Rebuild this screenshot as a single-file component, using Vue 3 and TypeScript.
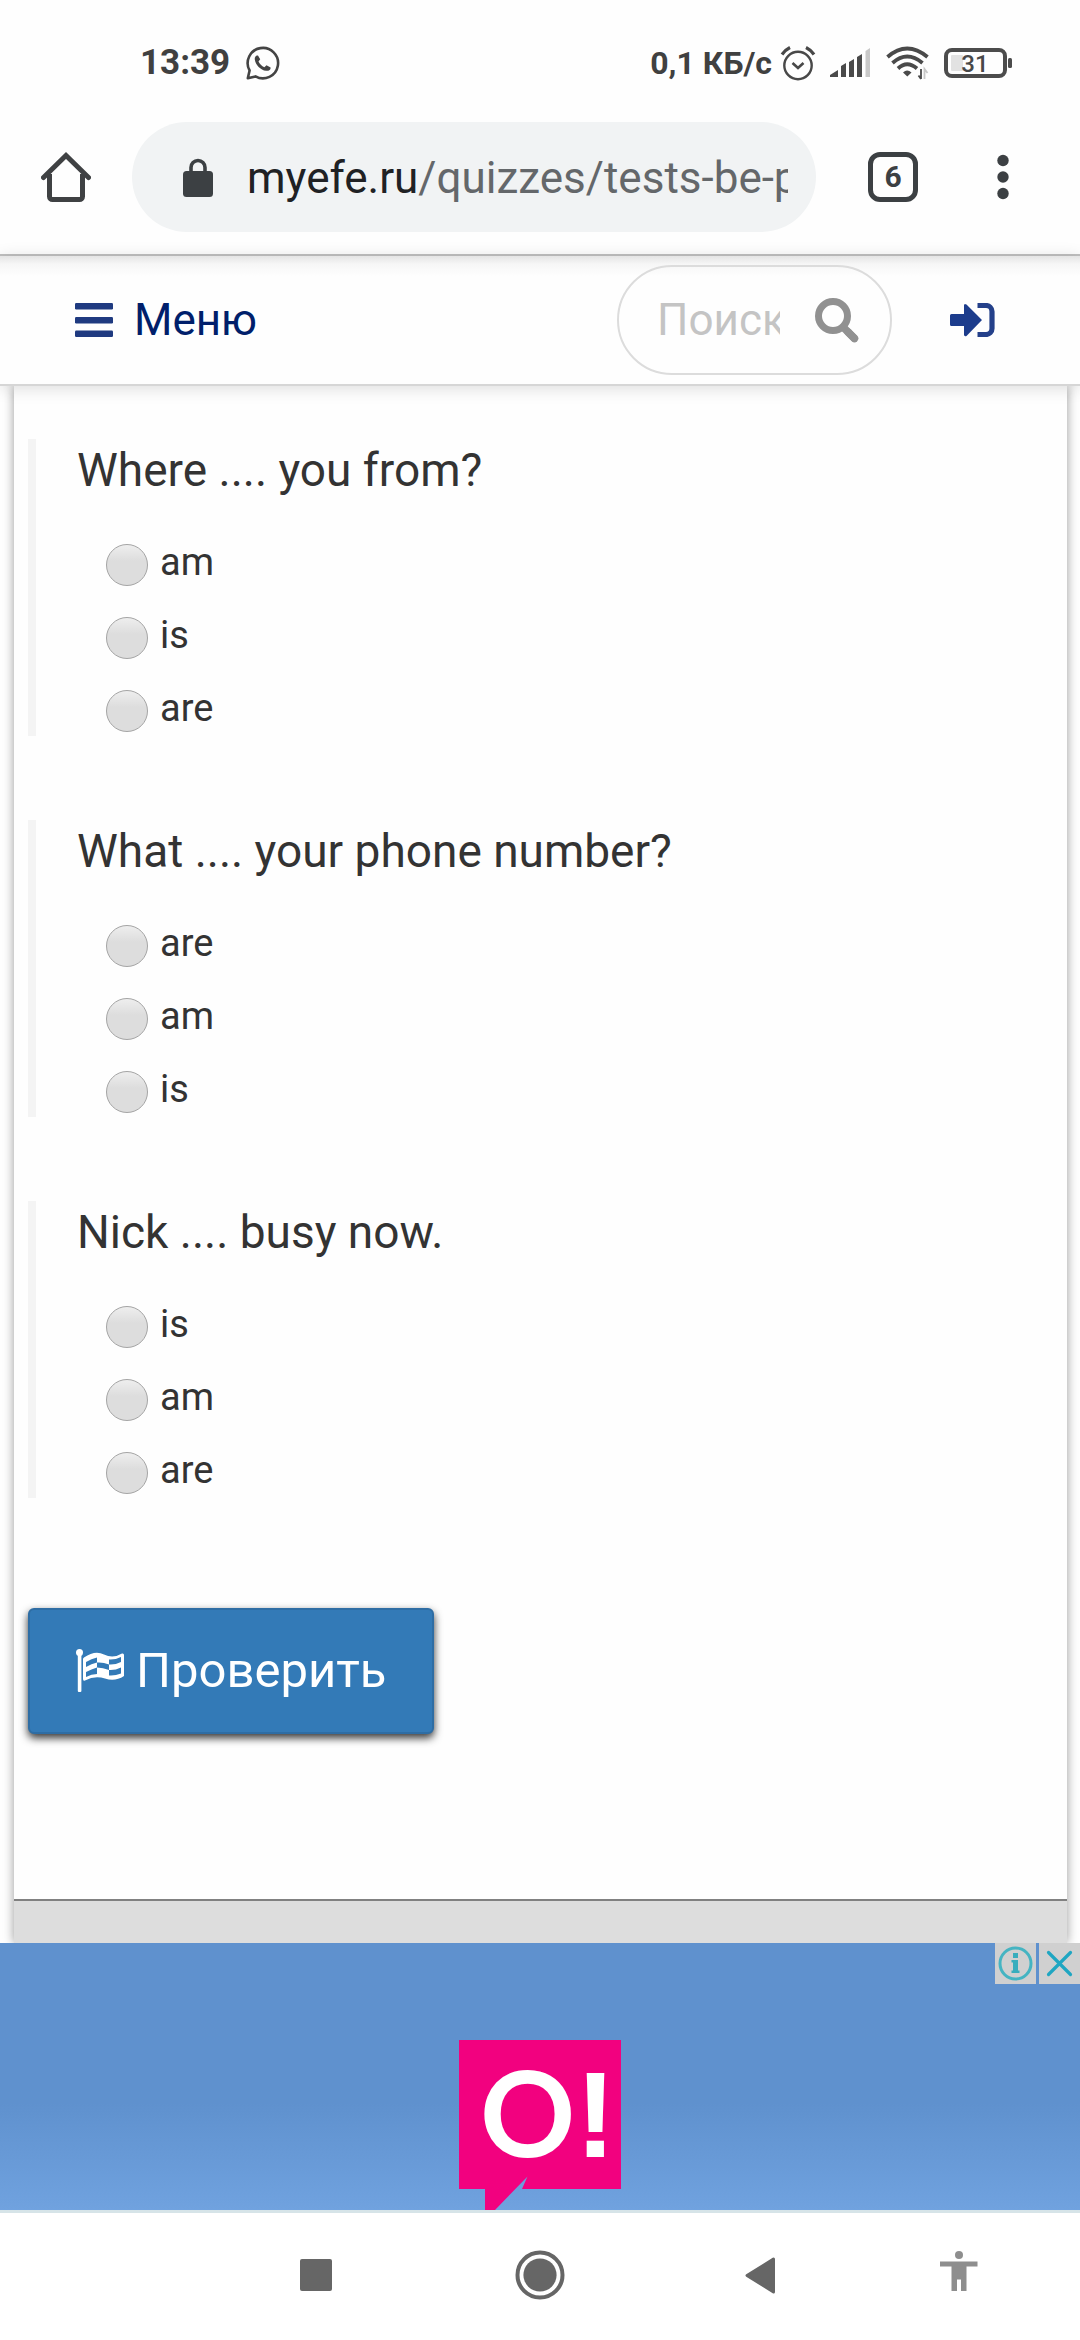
<script setup lang="ts">
import { ref } from 'vue'

interface Question {
  id: string
  title: string
  options: string[]
}

const questions: Question[] = [
  { id: 'q1', title: 'Where .... you from?', options: ['am', 'is', 'are'] },
  { id: 'q2', title: 'What .... your phone number?', options: ['are', 'am', 'is'] },
  { id: 'q3', title: 'Nick .... busy now.', options: ['is', 'am', 'are'] },
]

const answers = ref<Record<string, string>>({})
const query = ref('')
</script>

<template>
  <div class="screen">
    <div class="status">
      <span class="clock">13:39</span>
      <svg class="whatsapp" width="34" height="34" viewBox="0 0 34 34" fill="none">
        <path d="M3.600 24.500A15.200 15.200 0 1 1 9.500 30.400L1.800 32.200Z" stroke="#444" stroke-width="2.600" stroke-linejoin="round" />
        <path d="M12 9.500c-2-.6-3.500 1.400-3.200 3.900.7 5.300 5.700 10.600 11.300 11.400 2.500.3 4.900-1.200 4.500-3.400l-4.100-2.200-2.100 2c-2.700-1.100-4.800-3.200-5.900-5.700l1.700-2.200z" fill="#444" />
      </svg>
      <span class="speed">0,1 КБ/с</span>
      <svg class="alarm" width="36" height="36" viewBox="0 0 36 36" fill="none" stroke="#484848">
        <circle cx="18" cy="20.500" r="13.700" stroke-width="2.400" />
        <path d="M12.500 18l5.500 5 5.500-5" stroke-width="2.600" />
        <path d="M2 9.500Q5 5 10 2.500M34 9.500Q31 5 26 2.500" stroke-width="3.200" />
      </svg>
      <svg class="signal" width="40" height="30" viewBox="0 0 40 30" fill="#4a4a4a">
        <path d="M0 29v-2l8-5v7zM11 29V18l5-3v14zM19 29V14l5-3v18zM27 29V9l5-3v23z" />
        <path d="M35.500 29V3l4.500-3v29z" fill="#c8c8c8" />
      </svg>
      <svg class="wifi" width="44" height="34" viewBox="0 0 44 34" fill="none" stroke="#4a4a4a" stroke-width="3.800">
        <path d="M1.500 11Q21 -6 41.500 11M6.500 17Q21 4 36.500 17M12 22.500Q21 14 31 22.500" />
        <path d="M17 26.500q4-4 8.500 0l-4.200 4z" fill="#4a4a4a" stroke="none" />
        <path d="M35 23v10M32.500 29.500l2.500 3.500" stroke-width="1.800" />
        <path d="M38.500 33V23l3 4" stroke="#c8c8c8" stroke-width="1.800" />
      </svg>
      <svg class="battery" width="70" height="30" viewBox="0 0 70 30">
        <rect x="2" y="2" width="59" height="26" rx="6" fill="none" stroke="#4c4c4c" stroke-width="4" />
        <rect x="7" y="7" width="12" height="16" rx="1" fill="#e2e2e2" />
        <rect x="64" y="10" width="4" height="10" rx="1.500" fill="#4c4c4c" />
        <text x="31" y="24" text-anchor="middle" class="charge">31</text>
      </svg>
    </div>

    <div class="toolbar">
      <button class="plain" type="button" aria-label="Home">
        <svg width="50" height="50" viewBox="0 0 50 50" fill="none" stroke="#3f4143">
          <path d="M8.500 22v22.500a3 3 0 0 0 3 3h27a3 3 0 0 0 3-3V22" stroke-width="5" />
          <path d="M2.500 25.500L25 3.500l22.500 22" stroke-width="5" stroke-linecap="round" />
        </svg>
      </button>
      <button class="address" type="button">
        <svg class="lock" width="30" height="40" viewBox="0 0 30 40">
          <path d="M8 15V9.500a7 7 0 0 1 14 0V15" fill="none" stroke="#3c4043" stroke-width="3.600" />
          <rect x="0" y="13" width="30" height="26" rx="3.500" fill="#3c4043" />
        </svg>
        <span class="url"><span class="host">myefe.ru</span>/quizzes/tests-be-p</span>
      </button>
      <button class="plain tabs" type="button" aria-label="Tabs">6</button>
      <button class="plain more" type="button" aria-label="More">
        <svg width="12" height="46" viewBox="0 0 12 46" fill="#3c4043">
          <circle cx="6" cy="6.500" r="5.700" />
          <circle cx="6" cy="23" r="5.700" />
          <circle cx="6" cy="39.500" r="5.700" />
        </svg>
      </button>
    </div>

    <header class="site-header">
      <a class="menu" href="#menu">
        <svg width="38" height="34" viewBox="0 0 38 34" fill="#1f3a80">
          <rect y="0" width="38" height="6.500" rx="1.200" />
          <rect y="14" width="38" height="6.500" rx="1.200" />
          <rect y="27.500" width="38" height="6.500" rx="1.200" />
        </svg>
        <span>Меню</span>
      </a>
      <form class="search" @submit.prevent>
        <input v-model="query" type="text" placeholder="Поиск..." aria-label="Поиск" />
        <button class="plain" type="submit" aria-label="Найти">
          <svg width="44" height="45" viewBox="0 0 44 45" fill="none" stroke="#919191">
            <circle cx="18" cy="18" r="14.500" stroke-width="7" />
            <path d="M29 30l11 11" stroke-width="7.500" />
            <path d="M33 34l6.500 6.500" stroke-width="7.500" stroke-linecap="round" />
          </svg>
        </button>
      </form>
      <a class="login" href="#login" aria-label="Войти">
        <svg width="45" height="34" viewBox="0 0 45 34">
          <path d="M1.500 11H14V2.500Q14 0 16.500 1.500L32 17 16.500 33Q14 34 14 31.500V23H1.500Q0 23 0 21.500v-9Q0 11 1.500 11z" fill="#1c3c8c" />
          <path d="M27.500 2.500H36a6 6 0 0 1 6 6v17a6 6 0 0 1-6 6h-8.500" fill="none" stroke="#24408a" stroke-width="5.200" />
        </svg>
      </a>
    </header>

    <main class="page">
      <form @submit.prevent>
        <fieldset v-for="q in questions" :key="q.id" class="question">
          <legend>{{ q.title }}</legend>
          <label v-for="o in q.options" :key="o">
            <input v-model="answers[q.id]" type="radio" :name="q.id" :value="o" />
            <span>{{ o }}</span>
          </label>
        </fieldset>
        <button class="check" type="submit">
          <svg width="48" height="44" viewBox="0 0 48 44">
            <circle cx="3.500" cy="3.500" r="3.500" fill="#fff" />
            <rect x="1.800" y="4" width="3.600" height="39" rx="1" fill="#fff" />
            <path d="M8 8.500Q19 1 28 5.500T46 4.500Q48 4 48 6V27Q39 33 29 29.500T9 31.500Q7 32.500 7 30V10Q7 9 8 8.500Z" fill="#fff" />
            <path d="M10 13Q15.500 9.500 21 8.500V13.500Q15.500 14.500 10 18ZM21 13.500Q27 13 33 15.500V21Q27 18.500 21 18.500ZM33 10.500Q39 11 45 8V13Q39 16 33 15.500ZM10 23Q15.500 20 21 18.500V25Q15.500 25 10 28ZM33 21Q39 21.500 45 18.500V24.500Q39 27 33 26.500Z" fill="#337ab7" />
          </svg>
          <span>Проверить</span>
        </button>
      </form>
      <div class="footer"></div>
    </main>

    <aside class="ad">
      <svg class="logo" width="162" height="170" viewBox="0 0 162 170" role="img" aria-label="O!">
        <path d="M0 0H162V149H63L68.500 136.500 36 170H26V149H0Z" fill="#f2017f" />
        <text x="21" y="117" class="logo-text">O<tspan class="logo-mark">!</tspan></text>
      </svg>
      <div class="ad-controls">
        <button type="button" aria-label="Ad info">
          <svg width="41" height="41" viewBox="0 0 41 41">
            <circle cx="20.500" cy="20.500" r="15.500" fill="none" stroke="#45b4c2" stroke-width="3" />
            <path d="M18 10h5v5h-5zM16.500 17H23v10.500h1.500V30h-8v-2.500H18V19.500h-1.500z" fill="#38adbd" />
          </svg>
        </button>
        <button type="button" aria-label="Close ad">
          <svg width="41" height="41" viewBox="0 0 41 41">
            <path d="M9.500 9.500l22 22M31.500 9.500l-22 22" stroke="#1fa6c2" stroke-width="3.200" stroke-linecap="round" />
          </svg>
        </button>
      </div>
    </aside>

    <nav class="system">
      <button class="plain recent" type="button" aria-label="Recent apps">
        <svg width="32" height="32" viewBox="0 0 32 32"><rect width="32" height="32" rx="2" fill="#666" /></svg>
      </button>
      <button class="plain" type="button" aria-label="Home screen">
        <svg width="50" height="50" viewBox="0 0 50 50">
          <circle cx="25" cy="25" r="22.500" fill="none" stroke="#666" stroke-width="4" />
          <circle cx="25" cy="25" r="16.600" fill="#666" />
        </svg>
      </button>
      <button class="plain" type="button" aria-label="Back">
        <svg width="31" height="37" viewBox="0 0 31 37">
          <path d="M28.500 2v33L2 18.500Z" fill="#666" stroke="#666" stroke-width="3" stroke-linejoin="round" />
        </svg>
      </button>
      <button class="plain" type="button" aria-label="Accessibility">
        <svg class="person" width="38" height="48" viewBox="0 0 38 48" fill="#8e8e8e">
          <circle cx="19" cy="4" r="4" />
          <path d="M0 10.500H37.500V15.500H26.500V40H21V28.500H17V40H11.500V15.500H0Z" />
        </svg>
      </button>
    </nav>
  </div>
</template>

<style>
body {
  margin: 0;
  background: #fff;
}
</style>

<style scoped>
.screen {
  display: flex;
  flex-direction: column;
  min-height: 100vh;
  overflow: hidden;
  background: #fefefe;
  color: #333;
  font-family: Roboto, "Noto Sans", sans-serif;
}

svg {
  display: block;
  flex: none;
}

.plain {
  display: flex;
  align-items: center;
  justify-content: center;
  padding: 0;
  border: 0;
  background: none;
  font-family: inherit;
}

.status {
  display: flex;
  align-items: center;
  height: 122px;
  padding: 3px 66px 0 140px;
  box-sizing: border-box;
  color: #404040;
  font-weight: 700;
  line-height: 40px;
}

.clock {
  font-size: 35px;
}

.whatsapp {
  margin-left: 16px;
}

.speed {
  margin-left: auto;
  font-size: 32px;
}

.alarm {
  margin-left: 8px;
}

.signal {
  margin-left: 14px;
}

.wifi {
  margin-left: 16px;
}

.battery {
  margin-left: 14px;
}

.charge {
  fill: #484848;
  font-size: 24px;
  font-weight: 500;
}

.toolbar {
  display: flex;
  align-items: center;
  padding: 0 71px 22px 41px;
  border-bottom: 2px solid #c0c0c0;
}

.address {
  display: flex;
  flex: 1;
  align-items: center;
  min-width: 0;
  height: 110px;
  margin: 0 52px 0 41px;
  padding: 2px 28px 0 51px;
  border: 0;
  border-radius: 55px;
  background: #f1f3f4;
  color: #64676a;
  font-family: inherit;
  font-size: 44px;
  line-height: 56px;
  text-align: left;
}

.url {
  flex: 1;
  min-width: 0;
  margin-left: 34px;
  overflow: hidden;
  white-space: nowrap;
}

.host {
  color: #202124;
}

.tabs {
  width: 50px;
  height: 50px;
  box-sizing: border-box;
  border: 5px solid #3c4043;
  border-radius: 12px;
  color: #3c4043;
  font-size: 30px;
  font-weight: 700;
  line-height: 40px;
}

.more {
  margin-left: 79px;
}

.site-header {
  position: relative;
  z-index: 1;
  display: flex;
  align-items: center;
  padding: 9px 85px 9px 75px;
  border-bottom: 2px solid #d6d6d6;
  background: linear-gradient(#e4e4e4, #f6f6f6 8px, #fefefe 20px);
  box-shadow: 0 2px 16px rgba(0, 0, 0, 0.14);
}

.menu {
  display: flex;
  align-items: center;
  gap: 21px;
  color: #001f6b;
  font-size: 44px;
  line-height: 56px;
  text-decoration: none;
}

.search {
  display: flex;
  align-items: center;
  width: 275px;
  height: 110px;
  box-sizing: border-box;
  margin-left: auto;
  padding: 0 31px 0 38px;
  border: 2px solid #dcdcdc;
  border-radius: 55px;
  background: transparent;
}

.search input {
  flex: 1;
  min-width: 0;
  margin-right: 35px;
  padding: 0;
  border: 0;
  outline: 0;
  background: none;
  color: #333;
  font-family: inherit;
  font-size: 44px;
  line-height: 56px;
}

.search input::placeholder {
  color: #c4c4c4;
  opacity: 1;
}

.login {
  margin-left: 58px;
}

.page {
  margin: 0 13px 0 14px;
  padding-top: 53px;
  box-shadow: 0 0 10px rgba(0, 0, 0, 0.4);
}

.question {
  min-width: 0;
  margin: 0 14px 84px;
  padding: 0 0 4px 41px;
  border: 0;
  border-left: 8px solid #f4f4f4;
}

.question legend {
  float: left;
  width: 100%;
  margin-bottom: 43px;
  padding: 0;
  font-size: 46px;
  line-height: 62px;
}

.question label {
  display: flex;
  clear: both;
  align-items: center;
  width: max-content;
  height: 42px;
  margin: 0 0 31px 29px;
  font-size: 38px;
  line-height: 36px;
}

.question label:last-child {
  margin-bottom: 0;
}

.question label span {
  margin: 0 0 6px 12px;
}

.question input {
  width: 42px;
  height: 42px;
  box-sizing: border-box;
  margin: 0;
  border: 1px solid #a4a4a4;
  border-radius: 50%;
  appearance: none;
  background: linear-gradient(#eee, #ddd 40%);
}

.question input:checked {
  background: radial-gradient(#555 30%, #ddd 34%);
}

.check {
  display: flex;
  align-items: center;
  gap: 12px;
  height: 126px;
  margin: 110px 14px 165px;
  padding: 0 46px;
  border: 2px solid #2e6da4;
  border-radius: 6px;
  background: #337ab7;
  box-shadow: 0 4px 8px rgba(0, 0, 0, 0.8);
  color: #fff;
  font-family: inherit;
  font-size: 49px;
  line-height: 60px;
}

.footer {
  height: 42px;
  border-top: 2px solid #808080;
  background: #ddd;
}

.ad {
  position: relative;
  z-index: 1;
  display: flex;
  justify-content: center;
  padding-top: 97px;
  border-bottom: 3px solid #d6e4e8;
  background: linear-gradient(#5f91ce 60%, #70a2df);
}

.logo-text {
  fill: #fff;
  font-family: Lato, sans-serif;
  font-size: 118px;
  font-weight: 700;
}

.logo-mark {
  font-family: "Liberation Sans", sans-serif;
  font-size: 122px;
}

.ad-controls {
  position: absolute;
  top: 0;
  right: 0;
  display: flex;
  gap: 3px;
}

.ad-controls button {
  padding: 0;
  border: 0;
  background: #d0d0d0;
}

.system {
  display: grid;
  flex: 1;
  grid-template-columns: 224fr 224fr 216fr 182fr;
  align-items: center;
  min-height: 124px;
  padding: 0 30px 3px 204px;
  box-sizing: border-box;
  background: #fff;
}
</style>
